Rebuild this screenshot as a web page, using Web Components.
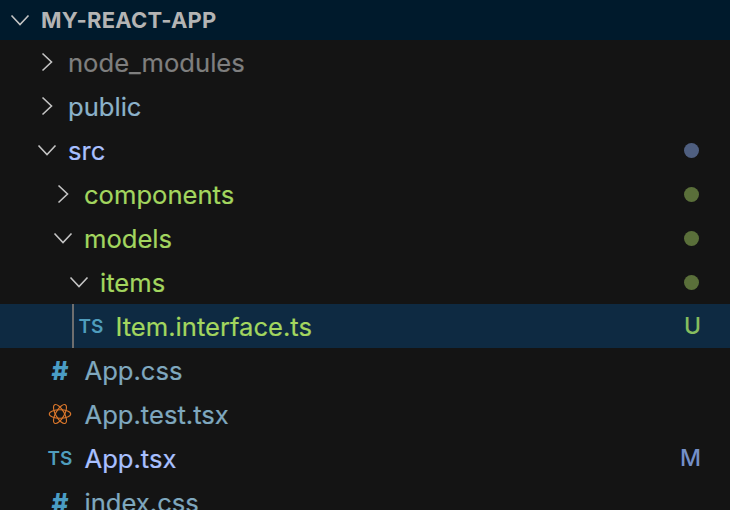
<!DOCTYPE html>
<html>
<head>
<meta charset="utf-8">
<title>Explorer</title>
<style>
    html, body { margin: 0; height: 100%; overflow: hidden; background: #141414; }
</style>
</head>
<body>
<file-explorer>
    <explorer-header>MY-REACT-APP</explorer-header>
    <tree-row indent="36" chevron="right" color="#7f7f7f">node_modules</tree-row>
    <tree-row indent="36" chevron="right" color="#8bb2ca">public</tree-row>
    <tree-row indent="36" chevron="down" color="#a9c0ff" dot="#4f5f80">src</tree-row>
    <tree-row indent="52" chevron="right" color="#a3d65f" dot="#5a6f3a">components</tree-row>
    <tree-row indent="52" chevron="down" color="#a3d65f" dot="#5a6f3a">models</tree-row>
    <tree-row indent="68" chevron="down" color="#a3d65f" dot="#5a6f3a">items</tree-row>
    <tree-row indent="79" icon="ts" color="#a3d65f" badge="U" badge-color="#86bd5f" selected guide>Item.interface.ts</tree-row>
    <tree-row indent="48" icon="hash" color="#7fa8bf">App.css</tree-row>
    <tree-row indent="48" icon="react" color="#7fa8bf">App.test.tsx</tree-row>
    <tree-row indent="48" icon="ts" color="#a9c0ff" badge="M" badge-color="#7490c8">App.tsx</tree-row>
    <tree-row indent="48" icon="hash" color="#7fa8bf">index.css</tree-row>
</file-explorer>

<script>
const FONT = `Inter, "Liberation Sans", sans-serif`;

const CHEVRONS = {
    right: `<svg viewBox="0 0 12 20" width="12" height="20" fill="none" stroke="#c4c4c4" stroke-width="1.6"><path d="M1.5 1.5 L10.5 10 L1.5 18.5"/></svg>`,
    down: `<svg viewBox="0 0 20 12" width="20" height="12" fill="none" stroke="#c4c4c4" stroke-width="1.6"><path d="M1.5 1.5 L10 10.5 L18.5 1.5"/></svg>`
};

const ICONS = {
    ts: `<span class="ts">TS</span>`,
    hash: `<span class="hash">#</span>`,
    react: `<svg viewBox="0 0 26 24" width="26" height="24" fill="none" stroke="#d9762b" stroke-width="1.2">
            <ellipse cx="13" cy="12" rx="11.6" ry="4.6"/>
            <ellipse cx="13" cy="12" rx="11.6" ry="4.6" transform="rotate(60 13 12)"/>
            <ellipse cx="13" cy="12" rx="11.6" ry="4.6" transform="rotate(120 13 12)"/>
        </svg>`
};

class FileExplorer extends HTMLElement {
    constructor() {
        super();
        const shadow = this.attachShadow({ mode: 'open' });
        shadow.innerHTML = `
            <style>
                :host {
                    display: flex;
                    flex-direction: column;
                    width: 730px;
                    height: 510px;
                    overflow: hidden;
                    background: #141414;
                    font-family: ${FONT};
                }
            </style>
            <slot></slot>
        `;
    }
}

class ExplorerHeader extends HTMLElement {
    constructor() {
        super();
        const shadow = this.attachShadow({ mode: 'open' });
        shadow.innerHTML = `
            <style>
                :host {
                    display: flex;
                    flex: none;
                    align-items: center;
                    height: 40px;
                    padding-left: 10px;
                    gap: 11px;
                    background: #001a2c;
                    color: #b4b4b4;
                    font-size: 22px;
                    font-weight: 700;
                    letter-spacing: 0.2px;
                }
                svg { display: block; flex: none; }
            </style>
            ${CHEVRONS.down}
            <slot></slot>
        `;
    }
}

class TreeRow extends HTMLElement {
    constructor() {
        super();
        const shadow = this.attachShadow({ mode: 'open' });
        const indent = Number(this.getAttribute('indent') || 0);
        const chevron = this.getAttribute('chevron');
        const icon = this.getAttribute('icon');
        const badge = this.getAttribute('badge');
        const dot = this.getAttribute('dot');

        let lead = '';
        if (chevron) lead = `<span class="twistie">${CHEVRONS[chevron]}</span>`;
        if (icon) lead = `<span class="icon">${ICONS[icon]}</span>`;

        let deco = '';
        if (badge) deco = `<span class="badge" style="color:${this.getAttribute('badge-color')}">${badge}</span>`;
        if (dot) deco = `<span class="dot" style="background:${dot}"></span>`;

        shadow.innerHTML = `
            <style>
                :host {
                    display: flex;
                    flex: none;
                    align-items: center;
                    position: relative;
                    height: 44px;
                    padding-left: ${indent}px;
                    padding-right: 30px;
                    font-size: 25.6px;
                    white-space: nowrap;
                    color: ${this.getAttribute('color') || '#ccc'};
                }
                :host([selected]) { background: #0e2a42; }
                .guide {
                    position: absolute;
                    left: 72px;
                    top: 0;
                    bottom: 0;
                    width: 2px;
                    background: #6e6e6e;
                }
                .twistie, .icon {
                    flex: none;
                    display: flex;
                    align-items: center;
                    justify-content: center;
                }
                .twistie { width: 21px; margin-right: 11px; }
                .icon { width: 24px; margin-right: 12.5px; }
                .twistie svg { display: block; }
                .ts { color: #4f9dbd; font-size: 19px; font-weight: 600; }
                .hash { color: #4a9cc4; font-size: 26px; font-weight: 800; }
                .label { flex: 1; min-width: 0; -webkit-text-stroke: 0.2px currentColor; }
                .badge { font-size: 23px; font-weight: 500; margin-right: -1px; }
                .dot { width: 15px; height: 15px; border-radius: 50%; margin-right: 1px; }
            </style>
            ${this.hasAttribute('guide') ? '<span class="guide"></span>' : ''}
            ${lead}
            <span class="label"><slot></slot></span>
            ${deco}
        `;
    }
}

customElements.define('file-explorer', FileExplorer);
customElements.define('explorer-header', ExplorerHeader);
customElements.define('tree-row', TreeRow);
</script>
</body>
</html>
